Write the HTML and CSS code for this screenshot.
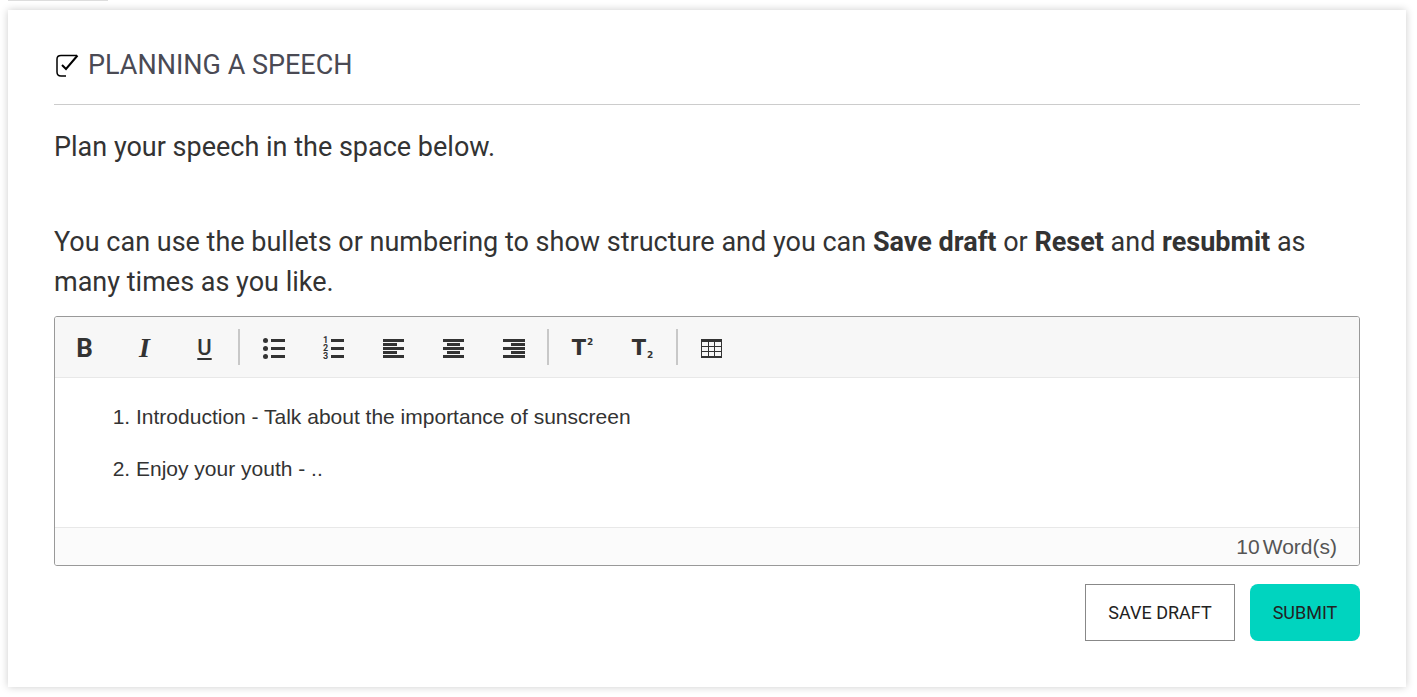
FILE: index.html
```html
<!DOCTYPE html>
<html lang="en">
<head>
    <meta charset="UTF-8">
    <meta name="viewport" content="width=device-width, initial-scale=1.0">
    <title>Planning a speech</title>
    <link rel="stylesheet" href="styles.css">
</head>
<body>
    <div class="tab-edge"></div>
    <main class="card">
        <h1 class="card-title">
            <svg class="title-icon" viewBox="0 0 24 24" aria-hidden="true">
                <path d="M12 23H7Q3 23 3 19V6Q3 2.500 7 2.500H23"/>
                <path class="tick" d="M8 12l4 4L23.500 2.500"/>
            </svg>
            PLANNING A SPEECH
        </h1>

        <div class="instructions">
            <p>Plan your speech in the space below.</p>
            <p>You can use the bullets or numbering to show structure and you can <strong>Save draft</strong> or <strong>Reset</strong> and <strong>resubmit</strong> as many times as you like.</p>
        </div>

        <form class="answer">
            <div class="editor">
                <div class="toolbar" role="toolbar" aria-label="Formatting">
                    <button type="button" class="tool bold" aria-label="Bold">B</button>
                    <button type="button" class="tool italic" aria-label="Italic">I</button>
                    <button type="button" class="tool underline" aria-label="Underline">U</button>
                    <span class="separator"></span>
                    <button type="button" class="tool" aria-label="Bulleted list">
                        <svg viewBox="0 0 22 22" aria-hidden="true">
                            <circle cx="2.500" cy="3.500" r="2.500"/><circle cx="2.500" cy="11.500" r="2.500"/><circle cx="2.500" cy="19.500" r="2.500"/>
                            <path d="M8 2h14v3H8zM8 10h14v3H8zM8 18h14v3H8z"/>
                        </svg>
                    </button>
                    <button type="button" class="tool" aria-label="Numbered list">
                        <svg viewBox="0 0 22 22" aria-hidden="true">
                            <text x="0" y="6">1</text><text x="0" y="14">2</text><text x="0" y="22">3</text>
                            <path d="M8 2h13v3H8zM8 10h13v3H8zM8 18h13v3H8z"/>
                        </svg>
                    </button>
                    <button type="button" class="tool" aria-label="Align left">
                        <svg viewBox="0 0 22 22" aria-hidden="true">
                            <path d="M0 2h21v3H0zM0 6h14v3H0zM0 10h21v3H0zM0 14h14v3H0zM0 18h21v3H0z"/>
                        </svg>
                    </button>
                    <button type="button" class="tool" aria-label="Align centre">
                        <svg viewBox="0 0 22 22" aria-hidden="true">
                            <path d="M0 2h21v3H0zM4 6h13v3H4zM0 10h21v3H0zM4 14h13v3H4zM0 18h21v3H0z"/>
                        </svg>
                    </button>
                    <button type="button" class="tool" aria-label="Align right">
                        <svg viewBox="0 0 22 22" aria-hidden="true">
                            <path d="M0 2h22v3H0zM8 6h14v3H8zM0 10h22v3H0zM8 14h14v3H8zM0 18h22v3H0z"/>
                        </svg>
                    </button>
                    <span class="separator"></span>
                    <button type="button" class="tool script" aria-label="Superscript">T<sup>2</sup></button>
                    <button type="button" class="tool script" aria-label="Subscript">T<sub>2</sub></button>
                    <span class="separator"></span>
                    <button type="button" class="tool" aria-label="Insert table">
                        <svg viewBox="0 0 22 22" aria-hidden="true">
                            <path d="M0 2h21v3H0zM0 9h21v1H0zM0 14h21v1H0zM0 19h21v2H0zM0 2h1v19H0zM7 5h1v15H7zM13 5h1v15h-1zM20 2h1v19h-1z"/>
                        </svg>
                    </button>
                </div>

                <div class="editor-content" contenteditable="true" spellcheck="false" role="textbox" aria-multiline="true" aria-label="Your speech plan">
                    <ol>
                        <li>Introduction - Talk about the importance of sunscreen</li>
                        <li>Enjoy your youth - ..</li>
                    </ol>
                </div>

                <div class="word-count"><span>10</span><span>Word(s)</span></div>
            </div>

            <div class="actions">
                <button type="button" class="save-btn">SAVE DRAFT</button>
                <button type="submit" class="submit-btn">SUBMIT</button>
            </div>
        </form>
    </main>
</body>
</html>
```
FILE: styles.css
```css
* {
    box-sizing: border-box;
}
body {
    margin: 0;
    background-color: #fff;
    color: #333;
    font-family: Roboto, Arial, sans-serif;
}
.tab-edge {
    width: 100px;
    height: 1px;
    margin-left: 8px;
    background-color: #ddd;
}
.card {
    margin: 9px 11px 10px 8px;
    padding: 32px 46px 46px;
    background-color: #fff;
    box-shadow: 0 0 8px rgba(0, 0, 0, 0.2);
}
.card-title {
    display: flex;
    align-items: center;
    gap: 10px;
    margin: 0;
    padding-bottom: 16px;
    border-bottom: 1px solid #ccc;
    color: #4a4a54;
    font-size: 27px;
    font-weight: 400;
    line-height: 46px;
}
.title-icon {
    width: 24px;
    height: 24px;
    overflow: visible;
    fill: none;
    stroke: #000;
    stroke-width: 1.5;
}
.title-icon .tick {
    stroke-width: 2;
}
.instructions {
    padding-top: 22px;
    font-size: 27px;
    line-height: 40px;
}
.instructions p {
    margin: 0;
}
.instructions p + p {
    margin-top: 55px;
}
.editor {
    margin-top: 14px;
    border: 1px solid #999;
    border-radius: 3px;
    overflow: hidden;
}
.toolbar {
    display: flex;
    align-items: center;
    height: 61px;
    border-bottom: 1px solid #e8e8e8;
    background-color: #f7f7f7;
}
.tool {
    display: flex;
    align-items: center;
    justify-content: center;
    width: 60px;
    height: 60px;
    padding: 2px 1px 0 0;
    border: none;
    background: none;
    color: #333;
    font-family: Roboto, Arial, sans-serif;
    font-size: 26px;
    line-height: 30px;
    cursor: pointer;
}
.tool:hover {
    background-color: #e8e8e8;
}
.tool svg {
    width: 22px;
    height: 22px;
    overflow: visible;
    fill: #333;
}
.tool text {
    font-family: Roboto, Arial, sans-serif;
    font-size: 9px;
    font-weight: 700;
}
.bold {
    font-weight: 700;
}
.italic {
    font-family: "Liberation Serif", serif;
    font-size: 28px;
    font-style: italic;
    font-weight: 700;
}
.underline {
    font-size: 22px;
    font-weight: 500;
    text-decoration: underline 2px;
    text-underline-offset: 3px;
}
.script {
    font-family: "DejaVu Sans", sans-serif;
    font-size: 21px;
    font-weight: 700;
}
.script sup,
.script sub {
    padding-left: 1px;
    font-size: 9px;
    line-height: 10px;
}
.script sup {
    align-self: flex-start;
    margin-top: 18px;
}
.script sub {
    align-self: flex-end;
    margin-bottom: 17px;
}
.separator {
    width: 2px;
    height: 36px;
    margin: 0 4px 0 3px;
    background-color: #c8c8c8;
}
.editor-content {
    min-height: 149px;
    padding: 13px 20px;
    font-family: "Liberation Sans", Arial, sans-serif;
    font-size: 21px;
    line-height: 52px;
    outline: none;
}
.editor-content ol {
    margin: 0;
    padding-left: 61px;
}
.word-count {
    display: flex;
    justify-content: flex-end;
    gap: 3px;
    padding: 0 22px;
    border-top: 1px solid #e8e8e8;
    background-color: #fbfbfb;
    color: #555;
    font-family: "Liberation Sans", Arial, sans-serif;
    font-size: 21px;
    line-height: 37px;
}
.actions {
    display: flex;
    justify-content: flex-end;
    gap: 15px;
    margin-top: 18px;
}
.actions button {
    height: 57px;
    color: #222;
    font-family: Roboto, Arial, sans-serif;
    font-size: 18px;
    cursor: pointer;
}
.save-btn {
    min-width: 150px;
    border: 1px solid #888;
    background-color: #fff;
}
.submit-btn {
    min-width: 110px;
    border: none;
    border-radius: 8px;
    background-color: #00d4bf;
}
```
